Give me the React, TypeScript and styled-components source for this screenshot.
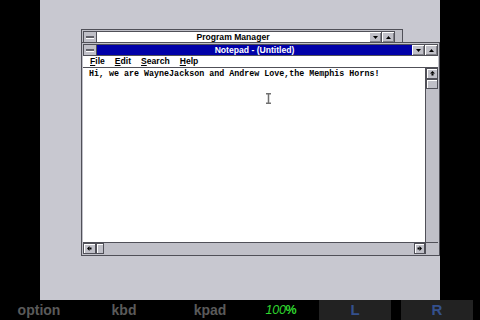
import styled, { createGlobalStyle } from "styled-components";

const Global = createGlobalStyle`
  html, body {
    margin: 0;
    padding: 0;
    background: #000;
  }
  body {
    width: 480px;
    height: 320px;
    overflow: hidden;
    font-family: "Liberation Sans", Arial, sans-serif;
  }
`;

const Screen = styled.div`
  width: 480px;
  height: 320px;
  display: flex;
  flex-direction: column;
  background: #000;
`;

const Stage = styled.div`
  height: 300px;
  display: flex;
  justify-content: center;
`;

const Desktop = styled.div`
  width: 400px;
  height: 300px;
  position: relative;
  overflow: hidden;
  background: #c8c8d0;
`;

const Win = styled.div<{ $left: number; $top: number; $w: number; $h: number; $padRight?: number }>`
  position: absolute;
  left: ${(p) => p.$left}px;
  top: ${(p) => p.$top}px;
  width: ${(p) => p.$w}px;
  height: ${(p) => p.$h}px;
  box-sizing: border-box;
  border: 1px solid #505058;
  background: #c0c0c8;
  padding: 1px ${(p) => p.$padRight ?? 1}px 1px 1px;
  display: flex;
  flex-direction: column;
`;

const TitleBar = styled.div`
  height: 12px;
  flex: none;
  display: flex;
`;

const ControlBox = styled.div`
  width: 14px;
  box-sizing: border-box;
  border: 1px solid #505058;
  background: #c0c0c8;
  display: flex;
  align-items: center;
  justify-content: center;
  &::after {
    content: "";
    width: 8px;
    height: 2px;
    background: #606068;
    border-bottom: 1px solid #fff;
  }
`;

const Title = styled.div<{ $active?: boolean }>`
  flex: 1;
  box-sizing: border-box;
  border-top: 1px solid #505058;
  border-bottom: 1px solid #505058;
  background: ${(p) => (p.$active ? "#0000a8" : "#fff")};
  color: ${(p) => (p.$active ? "#fff" : "#000")};
  font-weight: bold;
  font-size: 8.6px;
  line-height: 10px;
  text-align: center;
  white-space: nowrap;
`;

const SizeButton = styled.div`
  width: 13px;
  box-sizing: border-box;
  border: 1px solid #505058;
  border-left: none;
  background: #c0c0c8;
  box-shadow: inset 1px 1px 0 #fff, inset -1px -1px 0 #808088;
  display: flex;
  align-items: center;
  justify-content: center;
`;

const MenuBar = styled.div`
  height: 12px;
  flex: none;
  box-sizing: border-box;
  background: #fff;
  border-bottom: 1px solid #505058;
  display: flex;
  gap: 10px;
  padding-left: 7px;
  font-weight: bold;
  font-size: 8.6px;
  line-height: 11px;
  color: #000;
`;

const MenuItem = styled.span`
  &::first-letter {
    text-decoration: underline;
  }
`;

const Body = styled.div`
  flex: 1;
  display: grid;
  grid-template-columns: 1fr 13px;
  grid-template-rows: 1fr 12px;
  min-height: 0;
`;

const EditArea = styled.div`
  background: #fff;
  padding: 1px 0 0 6px;
  font-family: "Liberation Mono", "DejaVu Sans Mono", monospace;
  font-weight: bold;
  font-size: 8.35px;
  line-height: 10px;
  color: #000;
  white-space: pre;
  overflow: hidden;
`;

const VScroll = styled.div`
  box-sizing: border-box;
  border-left: 1px solid #505058;
  background: #c0c0c8;
  display: flex;
  flex-direction: column;
`;

const HScroll = styled.div`
  box-sizing: border-box;
  border-top: 1px solid #505058;
  background: #c0c0c8;
  display: flex;
`;

const Corner = styled.div`
  background: #c0c0c8;
  border-top: 1px solid #505058;
  border-left: 1px solid #505058;
`;

const ArrowBox = styled.div<{ $w: number; $h: number }>`
  width: ${(p) => p.$w}px;
  height: ${(p) => p.$h}px;
  flex: none;
  box-sizing: border-box;
  border: 1px solid #505058;
  background: #c0c0c8;
  box-shadow: inset 1px 1px 0 #fff;
  display: flex;
  align-items: center;
  justify-content: center;
`;

const Spacer = styled.div`
  flex: 1;
`;

const Cursor = styled.svg`
  position: absolute;
  left: 226px;
  top: 93px;
`;

const BottomBar = styled.div`
  height: 20px;
  display: flex;
  align-items: center;
  background: #000;
  font-family: "Liberation Sans", Arial, sans-serif;
  font-weight: bold;
  font-size: 14px;
`;

const Label = styled.div<{ $w: number }>`
  width: ${(p) => p.$w}px;
  text-align: center;
  color: #5a5a5a;
`;

const Zoom = styled.div<{ $w: number }>`
  width: ${(p) => p.$w}px;
  text-align: center;
  color: #2fd82f;
  font-style: italic;
  font-weight: normal;
  font-size: 12.5px;
  letter-spacing: -0.3px;
  b {
    font-style: normal;
  }
`;

const PadKey = styled.div<{ $w: number; $gap: number }>`
  width: ${(p) => p.$w}px;
  margin-left: ${(p) => p.$gap}px;
  height: 20px;
  background: #222;
  color: #34508c;
  text-align: center;
  line-height: 20px;
  font-size: 15px;
`;

const Tri = ({ up }: { up?: boolean }) => (
  <svg width="5" height="3" viewBox="0 0 5 3">
    <polygon points={up ? "2.5,0 5,3 0,3" : "0,0 5,0 2.5,3"} fill="#000" />
  </svg>
);

const Arrow = ({ dir }: { dir: "up" | "left" | "right" }) => {
  const rot = dir === "up" ? 0 : dir === "left" ? -90 : 90;
  return (
    <svg width="5" height="5" viewBox="0 0 5 5">
      <g transform={`rotate(${rot} 2.5 2.5)`}>
        <polygon points="2.5,0 5,2.5 0,2.5" fill="#000" />
        <rect x="1.5" y="2.5" width="2" height="2" fill="#000" />
      </g>
    </svg>
  );
};

const menus = ["File", "Edit", "Search", "Help"];

export default function App() {
  return (
    <Screen>
      <Global />
      <Stage>
        <Desktop>
          <Win $left={41} $top={29} $w={322} $h={60} $padRight={7}>
            <TitleBar>
              <ControlBox />
              <Title>Program Manager</Title>
              <SizeButton>
                <Tri />
              </SizeButton>
              <SizeButton>
                <Tri up />
              </SizeButton>
            </TitleBar>
          </Win>
          <Win $left={41} $top={42} $w={359} $h={214}>
            <TitleBar>
              <ControlBox />
              <Title $active>Notepad - (Untitled)</Title>
              <SizeButton>
                <Tri />
              </SizeButton>
              <SizeButton>
                <Tri up />
              </SizeButton>
            </TitleBar>
            <MenuBar>
              {menus.map((m) => (
                <MenuItem key={m}>{m}</MenuItem>
              ))}
            </MenuBar>
            <Body>
              <EditArea>Hi, we are WayneJackson and Andrew Love,the Memphis Horns!</EditArea>
              <VScroll>
                <ArrowBox $w={12} $h={11}>
                  <Arrow dir="up" />
                </ArrowBox>
                <ArrowBox $w={12} $h={10} />
                <Spacer />
              </VScroll>
              <HScroll>
                <ArrowBox $w={13} $h={11}>
                  <Arrow dir="left" />
                </ArrowBox>
                <ArrowBox $w={8} $h={11} />
                <Spacer />
                <ArrowBox $w={11} $h={11}>
                  <Arrow dir="right" />
                </ArrowBox>
              </HScroll>
              <Corner />
            </Body>
          </Win>
          <Cursor width="5" height="11" viewBox="0 0 5 11">
            <rect x="0" y="0" width="5" height="1.5" fill="#707070" />
            <rect x="1.75" y="0" width="1.5" height="11" fill="#707070" />
            <rect x="0" y="9.5" width="5" height="1.5" fill="#707070" />
          </Cursor>
        </Desktop>
      </Stage>
      <BottomBar>
        <Label $w={78}>option</Label>
        <Label $w={92}>kbd</Label>
        <Label $w={80}>kpad</Label>
        <Zoom $w={62}>
          100<b>%</b>
        </Zoom>
        <PadKey $w={72} $gap={7}>L</PadKey>
        <PadKey $w={72} $gap={10}>R</PadKey>
      </BottomBar>
    </Screen>
  );
}
